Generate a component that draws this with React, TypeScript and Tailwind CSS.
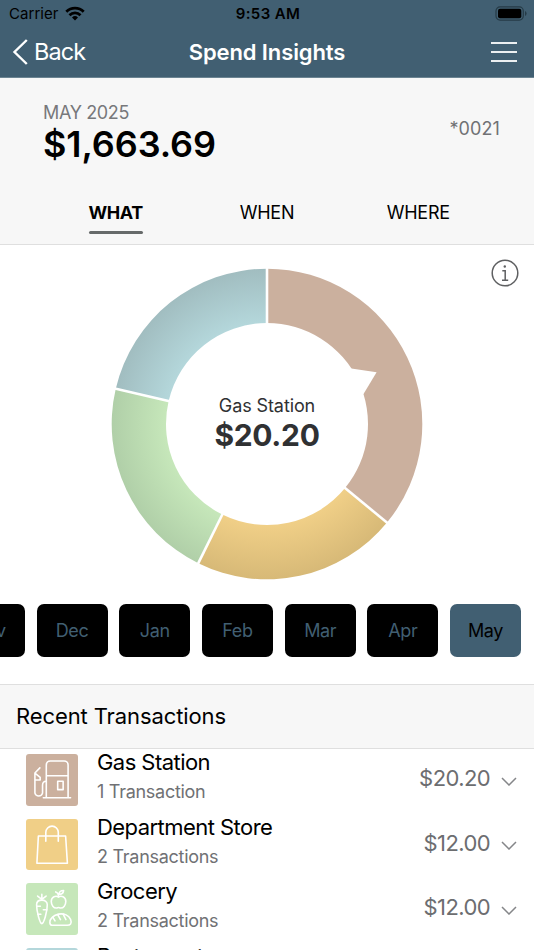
// Spend insights screen: monthly total, category donut, month picker and recent transactions.

import type { ReactNode } from "react";

type Category = {
  id: string;
  name: string;
  amount: number;
  count: number;
  tile: string;
  inner: string;
  outer: string;
  icon: ReactNode;
};

const CATEGORIES: Category[] = [
  {
    id: "gas", name: "Gas Station", amount: 20.2, count: 1,
    tile: "bg-[#cbb09e]", inner: "#cbb09e", outer: "#cbb09e",
    icon: (
      <>
        <path d="M20.5 44V11a4 4 0 0 1 4-4h14a4 4 0 0 1 4 4v33M17.5 44.2h27.5M20.5 22h22" />
        <path d="M32 27.5h5.5v8.500H32z" />
        <path d="M14 14L9 19.200V39.500a4 4 0 0 0 7.700 0V31.500q0-4 3.800-4M9 19.200l5.300 4.300v2.700H9" />
      </>
    ),
  },
  {
    id: "department", name: "Department Store", amount: 12, count: 2,
    tile: "bg-[#f0cf87]", inner: "#f0cf87", outer: "#d7b977",
    icon: (
      <>
        <path d="M12.500 17.200h27.500l1.800 27.500H11z" />
        <path d="M20 22.500V13.500a6.300 6.300 0 0 1 12.600 0v9" />
      </>
    ),
  },
  {
    id: "grocery", name: "Grocery", amount: 12, count: 2,
    tile: "bg-[#c6e7ba]", inner: "#c6e7ba", outer: "#b0cfa8",
    icon: (
      <>
        <path d="M16 17.300c-3 0-5.300 1.700-5.300 4.700C10.700 29 14 41 16 41s5.500-12 5.500-19c0-3-2.500-4.700-5.500-4.700z" />
        <path d="M16 17V11.500M16 16.500l-4.300-3.300M16 16.500l4.300-3.300M11 23.500h3.500M17.500 27H21M12 31.500h3" />
        <path d="M32.800 14.200c-2.500-1.700-7.300-.7-7.300 4.600 0 3.500 2.500 6.500 5 6.500 1.200 0 1.500-.5 2.300-.5s1.200.5 2.400.5c2.500 0 5-3 5-6.500 0-5.300-4.900-6.300-7.400-4.600z" />
        <path d="M32.800 14c0-2.500-1-4.500-2.800-5M33.200 11.500c.2-2.500 2-4 4.800-4-.2 2.500-2 4-4.800 4z" />
        <path d="M26.500 42.700c-3 0-3.300-4.700-.5-7.500 3.500-4 10-5 14.500-3 4.500 2 6 7 4.500 9.200-.8 1.100-2 1.300-3.500 1.300z" />
        <path d="M27 34.500l2.300 3.800M32 32l2.800 5M37.500 31.500l2.800 5.500" />
      </>
    ),
  },
  {
    id: "restaurant", name: "Restaurant", amount: 12, count: 2,
    tile: "bg-[#b4d7db]", inner: "#b4d7db", outer: "#a1bdc0",
    icon: <path d="M18 12v28M34 12v28" />,
  },
];

const MONTHS = ["Nov", "Dec", "Jan", "Feb", "Mar", "Apr", "May"];
const TABS = ["WHAT", "WHEN", "WHERE"];

const SIZE = 312;
const MID = SIZE / 2;
const OUTER = 155.3;
const INNER = 101;

function polar(r: number, angle: number): string {
  return `${MID + r * Math.sin(angle)} ${MID - r * Math.cos(angle)}`;
}

function slicePath(from: number, to: number): string {
  const large = to - from > Math.PI ? 1 : 0;
  return `M${polar(OUTER, from)} A${OUTER} ${OUTER} 0 ${large} 1 ${polar(OUTER, to)} L${polar(INNER, to)} A${INNER} ${INNER} 0 ${large} 0 ${polar(INNER, from)}Z`;
}

function Donut() {
  const total = CATEGORIES.reduce((sum, c) => sum + c.amount, 0);
  let angle = 0;
  const slices = CATEGORIES.map((c) => {
    const from = angle;
    angle += (c.amount / total) * Math.PI * 2;
    return { ...c, from, to: angle };
  });

  return (
    <svg viewBox={`0 0 ${SIZE} ${SIZE}`} className="size-[312px]">
      <defs>
        {slices.map((s) => (
          <radialGradient key={s.id} id={s.id} gradientUnits="userSpaceOnUse" cx={MID} cy={MID} r={OUTER}>
            <stop offset="0.65" stopColor={s.inner} />
            <stop offset="1" stopColor={s.outer} />
          </radialGradient>
        ))}
      </defs>
      {slices.map((s) => <path key={s.id} d={slicePath(s.from, s.to)} fill={`url(#${s.id})`} />)}
      {slices.map((s) => (
        <path key={s.id} d={`M${polar(INNER - 2, s.from)} L${polar(OUTER + 1, s.from)}`} stroke="#fff" strokeWidth="2.6" />
      ))}
      {/* pointer into the selected slice */}
      <path d="M240.300 100.500L265.600 104.200L252.500 126L244 126L236 101Z" fill="#fff" />
    </svg>
  );
}

function StatusBar() {
  return (
    <div className="grid h-7 grid-cols-3 items-center pl-[9px] pr-[7px] text-black">
      <div className="flex items-center gap-[6px]">
        <span className="text-[15px] tracking-[0.05px]">Carrier</span>
        <svg viewBox="0 0 20 15" className="-mt-[2px] h-[15px] w-5" fill="none" stroke="currentColor" strokeWidth="2.800">
          <path d="M1.300 5.700a12.400 12.400 0 0 1 17.400 0" />
          <path d="M4.500 9.200a7.800 7.800 0 0 1 11 0" />
          <path d="M10 14.500l-3-3a4.300 4.300 0 0 1 6 0z" fill="currentColor" stroke="none" />
        </svg>
      </div>
      <span className="text-center text-[15px] font-semibold tracking-[0.4px]">9:53 AM</span>
      <svg viewBox="0 0 32 15" className="-mt-[2px] h-[15px] w-8 justify-self-end">
        <rect x="1" y="0.900" width="27.300" height="13.200" rx="4" fill="none" stroke="#263b47" strokeWidth="1.200" />
        <rect x="3" y="2.800" width="23.300" height="9.400" rx="2" />
        <path d="M30 5v5q1.600-.8 1.600-2.500T30 5z" fill="#263b47" />
      </svg>
    </div>
  );
}

function NavBar() {
  return (
    <div className="grid h-[48px] grid-cols-[1fr_auto_1fr] items-center px-3 text-white">
      <div className="flex items-center gap-[6px]">
        <svg viewBox="0 0 16 26" className="h-[26px] w-4" fill="none" stroke="currentColor" strokeWidth="2.400">
          <path d="M14.800 1L2.500 13l12.300 12" />
        </svg>
        <span className="text-[23.500px] leading-[30px] tracking-[-0.9px]">Back</span>
      </div>
      <h1 className="text-[22px] font-semibold tracking-[-0.12px]">Spend Insights</h1>
      <div className="mr-[5px] flex flex-col gap-[7px] justify-self-end">
        <div className="h-0.5 w-[26px] bg-white/90" />
        <div className="h-0.5 w-[26px] bg-white/90" />
        <div className="h-0.5 w-[26px] bg-white/90" />
      </div>
    </div>
  );
}

function TransactionRow({ category }: { category: Category }) {
  const { name, amount, count, tile, icon } = category;
  return (
    <div className="flex h-[64.500px] shrink-0 items-start pl-[26px] pr-[17px]">
      <div className={`mt-[5px] size-[51.500px] rounded-[3px] ${tile}`}>
        <svg viewBox="0 0 52 52" className="size-full" fill="none" stroke="#fff" strokeWidth="1.600" strokeLinecap="round" strokeLinejoin="round">
          {icon}
        </svg>
      </div>
      <div className="-mt-px ml-[19.500px] flex-1">
        <p className="text-[22px] leading-7 tracking-[-0.55px] text-black">{name}</p>
        <p className="mt-[2px] text-[18px] leading-7 tracking-[-0.28px] text-[#707174]">
          {count} {count === 1 ? "Transaction" : "Transactions"}
        </p>
      </div>
      <span className="mt-[15px] text-[22px] leading-7 tracking-[-0.6px] text-[#6c6d70]">${amount.toFixed(2)}</span>
      <svg viewBox="0 0 16 9" className="ml-[11px] mt-[27.500px] h-[9px] w-4" fill="none" stroke="#858689" strokeWidth="1.500">
        <path d="M1 1l7 7 7-7" />
      </svg>
    </div>
  );
}

export default function App() {
  return (
    <div className="flex h-[950px] w-[534px] flex-col overflow-hidden bg-white font-['Inter',sans-serif]">
      <header className="h-[78px] shrink-0 border-b border-[#6b8492] bg-[#415f72]">
        <StatusBar />
        <NavBar />
      </header>

      <section className="h-[167px] shrink-0 border-b border-[#dfdfdf] bg-[#f7f7f7]">
        <div className="flex h-[110px] justify-between pl-[43px] pr-[34px] pt-[23px]">
          <div>
            <p className="text-[18px] leading-6 tracking-[-0.35px] text-[#77787b]">MAY 2025</p>
            <p className="-mt-px text-[36px] font-semibold leading-10 tracking-[-0.1px] text-black">$1,663.69</p>
          </div>
          <p className="mt-4 text-[18px] leading-6 tracking-[0.1px] text-[#707174]">*0021</p>
        </div>
        <nav className="grid grid-cols-3 px-10 text-[18px] leading-[50px] tracking-[-0.2px] text-black">
          {TABS.map((tab, i) => (
            <div key={tab} className="flex flex-col items-center">
              {i === 0 ? (
                <>
                  <span className="font-bold tracking-[-0.4px]">{tab}</span>
                  <div className="-mt-[7px] h-[2.500px] w-[54px] rounded-full bg-[#666a6a]" />
                </>
              ) : (
                <span>{tab}</span>
              )}
            </div>
          ))}
        </nav>
      </section>

      <section className="relative flex h-[359px] shrink-0 justify-center pt-[23px]">
        <Donut />
        <div className="absolute inset-x-0 top-[149px] text-center text-[#303133]">
          <p className="text-[18px] leading-6 tracking-[-0.1px]">{CATEGORIES[0].name}</p>
          <p className="-mt-px text-[30px] font-bold leading-9 tracking-[-0.3px]">${CATEGORIES[0].amount.toFixed(2)}</p>
        </div>
        <svg viewBox="0 0 28 28" className="absolute right-[15px] top-[14px] size-7" fill="none" stroke="#5f6062" strokeWidth="1.500">
          <circle cx="14" cy="14" r="12.800" />
          <path d="M11.300 11.700h2.900v9.500M11 21.300h6.200" />
          <circle cx="13.800" cy="7.500" r="1.200" fill="#5f6062" stroke="none" />
        </svg>
      </section>

      <div className="flex h-20 shrink-0 justify-end gap-[11.700px] pr-[13px]">
        {MONTHS.map((month) => (
          <button
            key={month}
            className={
              month === "May"
                ? "h-[53px] w-[71px] shrink-0 rounded-[7px] bg-[#415f72] text-[18px] tracking-[-0.4px] text-black"
                : "h-[53px] w-[71px] shrink-0 rounded-[7px] bg-black text-[18px] tracking-[-0.4px] text-[#415f72]"
            }
          >
            {month}
          </button>
        ))}
      </div>

      <h2 className="h-[65px] shrink-0 border-y border-[#dfdfdf] bg-[#f7f7f7] pl-4 text-[22px] leading-[63px] tracking-[-0.1px] text-black">
        Recent Transactions
      </h2>
      <section className="flex flex-1 flex-col overflow-hidden">
        {CATEGORIES.map((c) => <TransactionRow key={c.id} category={c} />)}
      </section>
    </div>
  );
}
